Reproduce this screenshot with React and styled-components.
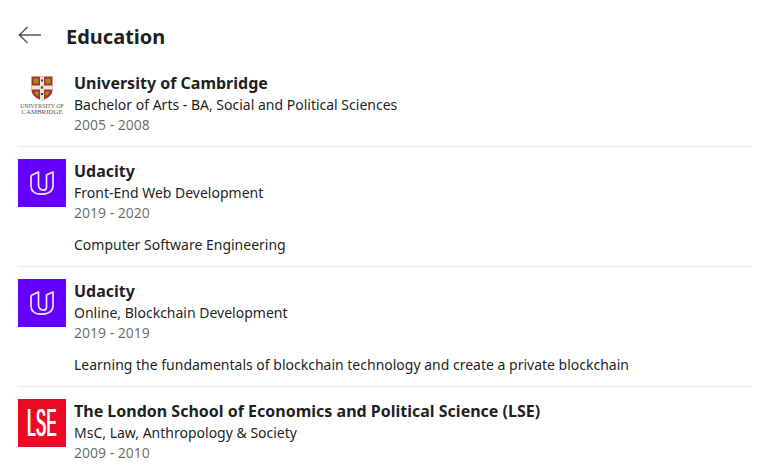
import React from "react";
import styled, { createGlobalStyle } from "styled-components";

const GlobalStyle = createGlobalStyle`
    html, body {
        margin: 0;
        padding: 0;
        background: #fff;
        overflow: hidden;
    }
    body {
        font-family: "Noto Sans", "Open Sans", sans-serif;
        color: rgba(0, 0, 0, 0.9);
    }
`;

const Page = styled.div`
    width: 760px;
    height: 476px;
    box-sizing: border-box;
    padding: 0 8px 0 18px;
    overflow: hidden;
`;

const Header = styled.header`
    display: flex;
    align-items: center;
    box-sizing: border-box;
    height: 71px;
    padding-top: 2px;
`;

const BackButton = styled.button`
    display: flex;
    width: 24px;
    height: 24px;
    margin: -3px 24px 0 0;
    padding: 0;
    border: 0;
    background: none;
    color: rgba(0, 0, 0, 0.65);
`;

const Title = styled.h1`
    margin: 0;
    font-size: 20px;
    line-height: 28px;
    font-weight: 700;
`;

const List = styled.ul`
    margin: 0;
    padding: 0;
    list-style: none;
`;

const Row = styled.li`
    display: flex;
    gap: 8px;
    padding: ${(p) => (p.$first ? "0" : "12px")} 0 11px;
    border-bottom: 1px solid #e8e8e8;
    &:last-child {
        border-bottom: 0;
    }
`;

const LogoBox = styled.div`
    flex: none;
    width: 48px;
    height: 48px;
    display: flex;
    align-items: center;
    justify-content: center;
    background: ${(p) => p.$bg || "#fff"};
`;

const Info = styled.div`
    min-width: 0;
`;

const School = styled.div`
    font-size: 16px;
    line-height: 24px;
    font-weight: 700;
`;

const Degree = styled.div`
    font-size: 14px;
    line-height: 20px;
`;

const Dates = styled.div`
    font-size: 14px;
    line-height: 20px;
    color: rgba(0, 0, 0, 0.6);
`;

const Description = styled.p`
    margin: 12px 0 0;
    font-size: 14px;
    line-height: 20px;
`;

const CambridgeBox = styled(LogoBox)`
    flex-direction: column;
    justify-content: flex-start;
    padding-top: 5px;
    box-sizing: border-box;
`;

const CambridgeName = styled.div`
    margin-top: 2px;
    font-family: "Liberation Serif", serif;
    font-size: 5.8px;
    line-height: 6px;
    text-align: center;
    white-space: nowrap;
    color: #555;
`;

const CambridgeLine = styled.span`
    display: block;
    font-size: 6.9px;
`;

const LseMark = styled.span`
    font-family: "Liberation Sans", sans-serif;
    font-size: 39px;
    line-height: 48px;
    letter-spacing: 1.5px;
    color: #fff;
    display: inline-block;
    transform: scaleX(0.38);
    text-shadow: 1px 0 0 #fff, -1px 0 0 #fff;
`;

const BackArrow = () => (
    <svg width="24" height="24" viewBox="0 0 24 24" fill="none" stroke="currentColor" strokeWidth="1.5">
        <path d="M1.5 12H23" />
        <path d="M9.5 4L1.5 12l8 8" />
    </svg>
);

const CambridgeShield = () => (
    <svg width="22" height="25" viewBox="0 0 22 25">
        <path d="M0.5 0.500h21v13c0 6-5 9-10.500 11C5.500 22.500 0.500 19.500 0.500 13.500z" fill="#a8322a" />
        <path d="M9 0.500h4v23.500h-4z" fill="#ece8e0" />
        <path d="M0.500 9.500h21v4h-21z" fill="#ece8e0" />
        <path d="M2.500 2.500h5v5h-5zM14.500 2.500h5v5h-5z" fill="#a8862f" />
        <path d="M3.500 15.500h4v4h-2zM14.500 15.500h4l-2 4h-2z" fill="#b0892e" />
        <path d="M9.800 10.300h2.400v2.400H9.800z" fill="#a8322a" />
        <path d="M10 3.500h2v2h-2zM10 17h2v2h-2z" fill="#3a3a3a" />
    </svg>
);

const UdacityMark = () => (
    <svg width="24" height="24" viewBox="0 0 24 24" fill="none" stroke="#efe8ff" strokeWidth="1.700" strokeLinejoin="round">
        <path d="M1 4.500L8.500 1V14C8.500 17.500 11 19.500 15 19" />
        <path d="M1 4.500V15C1 20.500 5.500 23.200 12 23.200 18.500 23.200 23 20 23 15V1L16.500 4V16C16.500 18 15.500 19 14 19" />
    </svg>
);

const schools = [
    {
        name: "University of Cambridge",
        degree: "Bachelor of Arts - BA, Social and Political Sciences",
        dates: "2005 - 2008",
        logo: "cambridge",
    },
    {
        name: "Udacity",
        degree: "Front-End Web Development",
        dates: "2019 - 2020",
        description: "Computer Software Engineering",
        logo: "udacity",
    },
    {
        name: "Udacity",
        degree: "Online, Blockchain Development",
        dates: "2019 - 2019",
        description: "Learning the fundamentals of blockchain technology and create a private blockchain",
        logo: "udacity",
    },
    {
        name: "The London School of Economics and Political Science (LSE)",
        degree: "MsC, Law, Anthropology & Society",
        dates: "2009 - 2010",
        logo: "lse",
    },
];

const Logo = ({ kind }) => {
    if (kind === "cambridge") {
        return (
            <CambridgeBox>
                <CambridgeShield />
                <CambridgeName>
                    UNIVERSITY OF
                    <CambridgeLine>CAMBRIDGE</CambridgeLine>
                </CambridgeName>
            </CambridgeBox>
        );
    }
    if (kind === "udacity") {
        return (
            <LogoBox $bg="#6400ff">
                <UdacityMark />
            </LogoBox>
        );
    }
    return (
        <LogoBox $bg="#eb0a23">
            <LseMark>LSE</LseMark>
        </LogoBox>
    );
};

const App = () => (
    <Page>
        <GlobalStyle />
        <Header>
            <BackButton aria-label="Back">
                <BackArrow />
            </BackButton>
            <Title>Education</Title>
        </Header>
        <List>
            {schools.map((school, i) => (
                <Row key={school.name + school.dates} $first={i === 0}>
                    <Logo kind={school.logo} />
                    <Info>
                        <School>{school.name}</School>
                        <Degree>{school.degree}</Degree>
                        <Dates>{school.dates}</Dates>
                        {school.description && <Description>{school.description}</Description>}
                    </Info>
                </Row>
            ))}
        </List>
    </Page>
);

export default App;
